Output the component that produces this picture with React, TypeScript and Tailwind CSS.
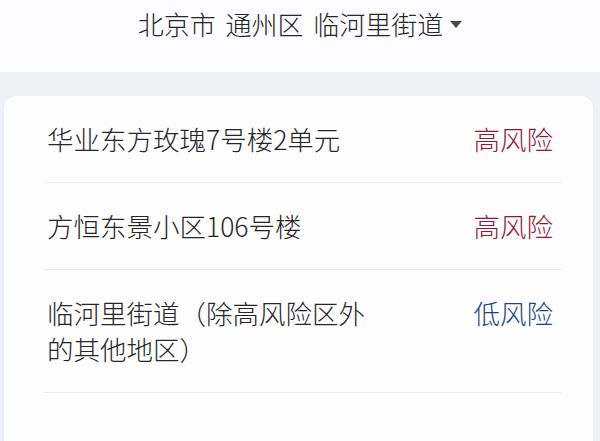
type Area = {
  name: string;
  level: 'high' | 'low';
};

const areas: Area[] = [
  { name: '华业东方玫瑰7号楼2单元', level: 'high' },
  { name: '方恒东景小区106号楼', level: 'high' },
  { name: '临河里街道（除高风险区外的其他地区）', level: 'low' },
];

function App() {
  return (
    <div
      className="min-h-screen bg-[#eef1f5] text-[#262626] font-light"
      style={{ fontFamily: '"Noto Sans CJK SC", "Noto Sans", sans-serif' }}
    >
      {/* Region picker */}
      <div className="h-[72px] bg-[#fcfcfe] flex justify-center pt-[6px]">
        <div className="flex items-center h-[36px] text-[26px] leading-[36px] text-[#262626]">
          <span className="[word-spacing:4px]">北京市 通州区 临河里街道</span>
          <svg width="12" height="7" viewBox="0 0 12 7" className="ml-[7px] mt-[1px]">
            <path d="M0 0 L12 0 L6 7 Z" fill="#4a4a4a" />
          </svg>
        </div>
      </div>

      {/* Risk list */}
      <div className="mt-[24px] ml-[4px] mr-[7px] bg-[#fdfdfe] rounded-[12px] shadow-[0_0_2px_rgba(0,0,0,0.04)] pl-[40px] pr-[32px] pb-[60px]">
        {areas.map((area) => (
          <div
            key={area.name}
            className="flex items-start pt-[25px] pb-[25px] border-b border-[#eceef1]"
          >
            <p className="w-[336px] pl-[3px] text-[26.5px] leading-[36px]">{area.name}</p>
            <div className="flex-1" />
            <span
              className={
                area.level === 'high'
                  ? 'pr-[8px] text-[26.5px] leading-[36px] text-[#951737]'
                  : 'pr-[8px] text-[26.5px] leading-[36px] text-[#1b467f]'
              }
            >
              {area.level === 'high' ? '高风险' : '低风险'}
            </span>
          </div>
        ))}
      </div>
    </div>
  );
}

export default App;
